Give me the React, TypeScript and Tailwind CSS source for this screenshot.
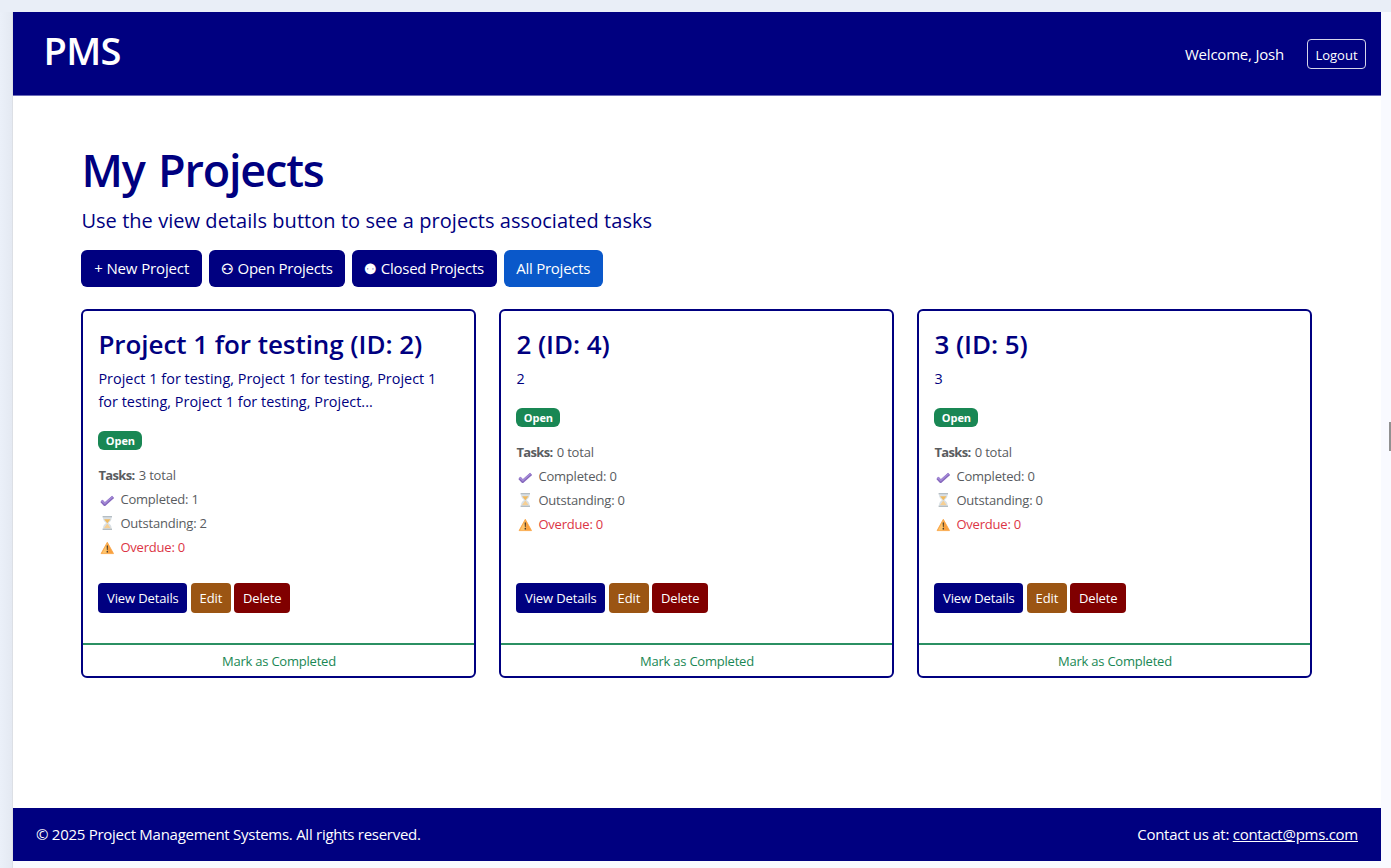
type Project = {
  title: string;
  description: string[];
  total: number;
  completed: number;
  outstanding: number;
  overdue: number;
};

const projects: Project[] = [
  {
    title: 'Project 1 for testing (ID: 2)',
    description: [
      'Project 1 for testing, Project 1 for testing, Project 1',
      'for testing, Project 1 for testing, Project...',
    ],
    total: 3,
    completed: 1,
    outstanding: 2,
    overdue: 0,
  },
  { title: '2 (ID: 4)', description: ['2'], total: 0, completed: 0, outstanding: 0, overdue: 0 },
  { title: '3 (ID: 5)', description: ['3'], total: 0, completed: 0, outstanding: 0, overdue: 0 },
];

function CheckIcon() {
  return (
    <svg className="mt-0.5 h-3.5 w-[18px] shrink-0" viewBox="0 0 18 14">
      <path d="M3.5 7.9 6.7 11.4 15.1 3.9" fill="none" stroke="#8668bd" strokeWidth="3.2" strokeLinejoin="round" />
      <path d="M3.5 7.4 6.8 10.5 14.7 3.5" fill="none" stroke="#a58bd8" strokeWidth="1.6" />
    </svg>
  );
}

function HourglassIcon() {
  return (
    <svg className="h-3.5 w-[18px] shrink-0" viewBox="0 0 18 14">
      <path d="M5 1.5h8.6c0 3-1.5 4.2-3.1 5.5 1.6 1.3 3.1 2.5 3.1 5.5H5c0-3 1.5-4.2 3.1-5.5C6.5 5.7 5 4.500 5 1.500z" fill="#d9e0e5" />
      <path d="M6.1 3.2h6.4L9.3 7.2z" fill="#f0b95e" />
      <path d="M9.3 7.6l3.4 4.6H5.9z" fill="#f6cf94" />
      <path d="M4.6 0H14v1.5H4.6zM4.6 12.4H14v1.5H4.6z" fill="#b4bdc3" />
    </svg>
  );
}

function WarningIcon() {
  return (
    <svg className="mt-0.5 h-3.5 w-[18px] shrink-0" viewBox="0 0 18 14">
      <path d="M9.3 1.3 15.5 12.6H3.1z" fill="#f9a13f" stroke="#f9a13f" strokeWidth=".8" strokeLinejoin="round" />
      <path d="M9.3 2.3v10H4.1z" fill="#ffc46b" />
      <path d="M8.6 4.6H10l-.3 4.6h-.8zM8.6 10.1H10v1.4H8.6z" fill="#4b3d2a" />
    </svg>
  );
}

function ProjectCard({ project }: { project: Project }) {
  return (
    <article className="flex h-[369px] w-[395px] flex-col rounded-[6px] border-2 border-[#000080]">
      <div className="flex-1 px-[15px]">
        <h2 className="mt-[16px] h-[35px] text-[26px] leading-[35px] font-semibold tracking-[-0.06px] whitespace-nowrap">{project.title}</h2>
        <div className="mt-[5px] text-[14.4px] leading-[23px] tracking-[0.03px]">
          {project.description.map((line) => (
            <p key={line} className="whitespace-nowrap">{line}</p>
          ))}
        </div>
        <div className="mt-[18px] flex h-[19px] w-[44px] items-center justify-center rounded-[6px] bg-[#198754] pt-px text-[11px] font-bold tracking-[-0.1px] text-white">
          Open
        </div>
        <div className="mt-[13px] text-[13px] leading-[24px] tracking-[-0.2px] text-[#595c5f]">
          <p>
            <b className="mr-px tracking-[-0.65px]">Tasks:</b> {project.total} total
          </p>
          <p className="flex items-center gap-[4px]">
            <CheckIcon />
            Completed: {project.completed}
          </p>
          <p className="flex items-center gap-[4px]">
            <HourglassIcon />
            Outstanding: {project.outstanding}
          </p>
          <p className="flex items-center gap-[4px] text-[#dc3545]">
            <WarningIcon />
            Overdue: {project.overdue}
          </p>
        </div>
      </div>
      <div className="mb-[30px] flex h-[30px] gap-[3.5px] px-[15px] text-[13px] tracking-[-0.13px] text-white">
        <button className="w-[89px] rounded-[4px] bg-[#000080] pt-px">View Details</button>
        <button className="w-[40px] rounded-[4px] bg-[#9b5513] pt-px">Edit</button>
        <button className="w-[55.5px] rounded-[4px] bg-[#800000] pt-px">Delete</button>
      </div>
      <button className="h-[33px] border-t-2 border-[#2b9063] pt-[2px] text-[13px] tracking-[-0.22px] text-[#198754]">
        Mark as Completed
      </button>
    </article>
  );
}

export default function App() {
  return (
    <div className="flex h-[868px] w-[1391px] flex-col overflow-hidden bg-[#e9eef7] pt-3 font-['Open_Sans','Noto_Sans',sans-serif] text-[#000080]">
      <div className="flex flex-1">
        <div className="w-[13px] border-r border-[#dcdfe5] bg-linear-to-r from-[#ebf0f9] to-[#e4e9f2]" />
        <div className="flex flex-1 flex-col bg-[#f9faff]">
          <div className="flex h-[849px] w-[1368px] flex-col bg-white">
            <header className="flex h-[84px] items-center justify-between border-b border-[#6c6cb8] bg-[#000080] pr-[15px] pl-[30.5px] text-white">
              <div className="mb-[7px] text-[38px] leading-none font-semibold tracking-[-0.7px]">PMS</div>
              <div className="flex items-center gap-[23px]">
                <span className="pt-[2px] text-[15px] tracking-[-0.21px]">Welcome, Josh</span>
                <button className="h-[30px] w-[59px] rounded-[4px] border border-[#d5d5ea] pt-[4px] text-[13px]">Logout</button>
              </div>
            </header>
            <main className="flex-1 pl-[68.4px]">
              <h1 className="mt-[45px] h-[58px] text-[45px] leading-[58px] font-[550] tracking-[-1.2px] [word-spacing:3px]">My Projects</h1>
              <p className="mt-[4px] h-[36px] text-[20px] leading-[36px] tracking-[0.05px]">
                Use the view details button to see a projects associated tasks
              </p>
              <div className="mt-[11px] flex h-[37px] gap-[7.2px] text-[15px] tracking-[-0.25px] text-white">
                <button className="w-[120.6px] rounded-[6px] bg-[#000080] tracking-[-0.13px]">+ New Project</button>
                <button className="w-[135.4px] rounded-[6px] bg-[#000080]">
                  <span className="text-[14px] font-bold">⚇</span> Open Projects
                </button>
                <button className="w-[144.8px] rounded-[6px] bg-[#000080]">
                  <span className="text-[14px] font-bold">⚉</span> Closed Projects
                </button>
                <button className="w-[99px] rounded-[6px] bg-[#0a58ca]">All Projects</button>
              </div>
              <div className="mt-[22px] flex gap-[23px]">
                {projects.map((project) => (
                  <ProjectCard key={project.title} project={project} />
                ))}
              </div>
            </main>
            <footer className="flex h-[53px] items-center justify-between bg-[#000080] pr-[23px] pl-[23px] text-[15px] tracking-[-0.27px] text-white">
              <span>© 2025 Project Management Systems. All rights reserved.</span>
              <span>
                Contact us at: <a href="mailto:contact@pms.com" className="underline">contact@pms.com</a>
              </span>
            </footer>
          </div>
        </div>
      </div>
      <div className="absolute top-[422px] left-[1389px] h-[29px] w-[2px] bg-[#919191]" />
    </div>
  );
}
